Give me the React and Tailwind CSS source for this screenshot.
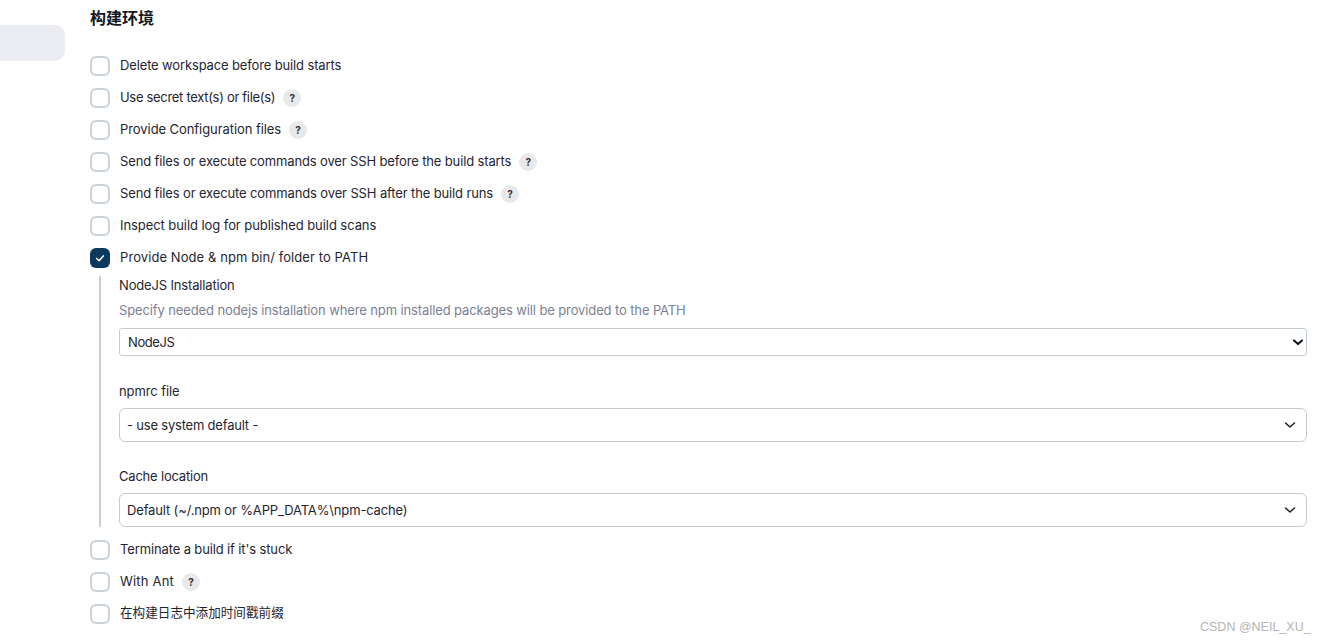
const font = { fontFamily: 'Inter, "Noto Sans CJK SC", sans-serif' };

function Help() {
  return (
    <span className="mt-0.5 ml-2 flex h-[18px] w-[18px] items-center justify-center rounded-full bg-[#e9e9eb] text-[10px] font-bold text-[#333]">
      ?
    </span>
  );
}

function CheckRow({ label, help, checked, labelClass = 'text-[13px]' }) {
  return (
    <div className="flex h-8 items-center">
      {checked ? (
        <span className="mt-0.5 flex h-5 w-5 shrink-0 items-center justify-center rounded-[6px] bg-[#0b3a5e]">
          <svg width="10" height="10" viewBox="0 0 12 12" fill="none" stroke="white" strokeWidth="1.8" strokeLinecap="round" strokeLinejoin="round">
            <path d="M2 6.5l2.8 2.8L10 3.5" />
          </svg>
        </span>
      ) : (
        <span className="mt-0.5 h-5 w-5 shrink-0 rounded-[6px] border-2 border-[#c9d3d9] bg-white" />
      )}
      <span className={`ml-2.5 leading-5 text-[#1f2530] ${labelClass}`}>{label}</span>
      {help && <Help />}
    </div>
  );
}

function SelectBox({ value, native, height, textClass }) {
  return (
    <div className={`flex items-center justify-between border border-[#c3ccd1] bg-white text-[13px] text-[#1f2530] ${height} ${native ? 'rounded-[3px] pr-[2px] pl-2' : 'rounded-[6px] pr-[10px] pl-[7px]'}`}>
      <span className={`pt-0.5 ${textClass}`}>{value}</span>
      {native ? (
        <svg width="12" height="12" viewBox="0 0 12 12" fill="none" stroke="#14181f" strokeWidth="2.2" strokeLinecap="round" strokeLinejoin="round">
          <path d="M2 4.5L6 8l4-3.5" />
        </svg>
      ) : (
        <svg width="12" height="12" viewBox="0 0 12 12" fill="none" stroke="#20262e" strokeWidth="1.6" strokeLinecap="round" strokeLinejoin="round">
          <path d="M1.5 4L6 8l4.5-4" />
        </svg>
      )}
    </div>
  );
}

export default function App() {
  return (
    <div className="relative flex h-[643px] w-[1325px] overflow-hidden bg-white" style={font}>
      <aside className="w-[90px] shrink-0 pt-[25px]">
        <div className="h-[36px] w-[65px] rounded-r-[10px] bg-[#ecedf2]" />
      </aside>

      <main className="w-[1217px]">
        <h2 className="mt-[8px] h-[41px] text-[16px] leading-[21px] font-bold text-[#14181f]">构建环境</h2>

        <CheckRow label="Delete workspace before build starts" labelClass="text-[13px] tracking-[-0.14px]" />
        <CheckRow label="Use secret text(s) or file(s)" help labelClass="text-[13px] tracking-[-0.31px]" />
        <CheckRow label="Provide Configuration files" help labelClass="text-[13px] tracking-[-0.07px]" />
        <CheckRow label="Send files or execute commands over SSH before the build starts" help labelClass="text-[13px] tracking-[-0.14px]" />
        <CheckRow label="Send files or execute commands over SSH after the build runs" help labelClass="text-[13px] tracking-[-0.13px]" />
        <CheckRow label="Inspect build log for published build scans" labelClass="text-[13px] tracking-[-0.07px]" />
        <CheckRow label="Provide Node & npm bin/ folder to PATH" checked labelClass="text-[13px] tracking-[0.08px]" />

        <div className="mt-[3px] ml-[9px] h-[251px] border-l-2 border-[#c5d0d6] pl-[18px]">
          <div className="text-[13px] leading-[18px] tracking-[-0.16px] text-[#1f2530]">NodeJS Installation</div>
          <div className="mt-[7px] text-[13px] leading-[18px] tracking-[-0.12px] text-[#7b7f93]">
            Specify needed nodejs installation where npm installed packages will be provided to the PATH
          </div>
          <div className="mt-[9px]">
            <SelectBox value="NodeJS" native height="h-[28px]" textClass="tracking-[-0.4px]" />
          </div>
          <div className="mt-[26px] text-[13px] leading-[18px] tracking-[-0.1px] text-[#1f2530]">npmrc file</div>
          <div className="mt-[8px]">
            <SelectBox value="- use system default -" height="h-[34px]" textClass="tracking-[-0.2px]" />
          </div>
          <div className="mt-[25px] text-[13px] leading-[18px] tracking-[-0.2px] text-[#1f2530]">Cache location</div>
          <div className="mt-[8px]">
            <SelectBox value="Default (~/.npm or %APP_DATA%\npm-cache)" height="h-[34px]" textClass="tracking-[-0.15px]" />
          </div>
        </div>

        <div className="mt-[6px]">
          <CheckRow label="Terminate a build if it's stuck" labelClass="text-[13px] tracking-[-0.13px]" />
          <CheckRow label="With Ant" help labelClass="text-[13px] tracking-[0.19px]" />
          <CheckRow label="在构建日志中添加时间戳前缀" labelClass="text-[12.6px]" />
        </div>
      </main>

      <div className="absolute top-[619px] left-[1200px] text-[12.5px] leading-4 text-[#b4b4b4]" style={{ fontFamily: '"Liberation Sans", sans-serif' }}>
        CSDN @NEIL_XU_
      </div>
    </div>
  );
}
